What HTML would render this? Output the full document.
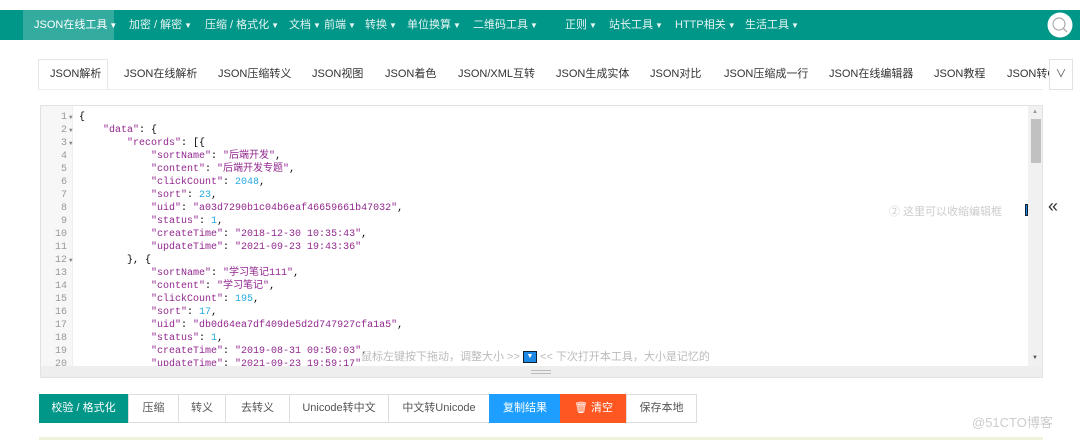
<!DOCTYPE html>
<html><head><meta charset="utf-8"><style>
*{margin:0;padding:0;box-sizing:border-box}
body{width:1080px;height:440px;background:#fff;position:relative;overflow:hidden;font-family:"Liberation Sans","Noto Sans CJK SC",sans-serif}
.nav{position:absolute;left:0;top:10px;width:1080px;height:30px;background:#009688}
.nav span{position:absolute;top:0;line-height:30px;font-size:11px;color:#e6f4f2;white-space:nowrap}
.nav span i{font-style:normal;font-size:8px;margin-left:2px}
.act{position:absolute;left:23px;top:0;width:91px;height:30px;background:#33ab9f}
.tab{position:absolute;top:59px;line-height:30px;font-size:11px;color:#333;white-space:nowrap}
.ed{position:absolute;left:40px;top:105px;width:1003px;height:273px;border:1px solid #e2e2e2;background:#fff;overflow:hidden}
.gut{position:absolute;left:0;top:0;width:32px;height:260px;background:#f7f7f7;border-right:1px solid #eee}
.code{position:absolute;left:0;top:5px;font-family:"Liberation Mono","Noto Sans CJK SC",monospace;font-size:10px}
.ln{display:block;height:13px;line-height:13px;white-space:pre;position:relative}
.n{display:inline-block;width:26px;text-align:right;color:#999;margin-right:12px}
.ar{position:absolute;left:28px;top:0;color:#888;font-size:6px}
.k{color:#92278f}.s{color:#92278f}.d{color:#25aae2}
.bar{position:absolute;left:0;top:260px;width:1003px;height:13px;background:#eee}
.sb{position:absolute;left:987px;top:0;width:15px;height:260px;background:#f1f1f1}
.btn{position:absolute;top:394px;height:29px;line-height:27px;font-size:11px;color:#555;border:1px solid #ddd;text-align:center;background:#fff}
</style></head><body>
<div class="nav"><div class="act"></div>
<span style="left:34px;color:#fff">JSON在线工具<i>▼</i></span>
<span style="left:129px">加密 / 解密<i>▼</i></span>
<span style="left:205px">压缩 / 格式化<i>▼</i></span>
<span style="left:289px">文档<i>▼</i></span>
<span style="left:324px">前端<i>▼</i></span>
<span style="left:365px">转换<i>▼</i></span>
<span style="left:407px">单位换算<i>▼</i></span>
<span style="left:473px">二维码工具<i>▼</i></span>
<span style="left:565px">正则<i>▼</i></span>
<span style="left:609px">站长工具<i>▼</i></span>
<span style="left:675px">HTTP相关<i>▼</i></span>
<span style="left:745px">生活工具<i>▼</i></span>
<svg style="position:absolute;left:1047px;top:2px" width="26" height="26"><circle cx="13" cy="13" r="12.5" fill="#fff"/><circle cx="12" cy="12" r="6" fill="none" stroke="#aaa" stroke-width="1.2"/><line x1="16.5" y1="16.5" x2="20" y2="20" stroke="#aaa" stroke-width="1.3"/></svg>
</div>
<div style="position:absolute;left:38px;top:59px;width:70px;height:31px;border:1px solid #e6e6e6;border-bottom-color:#fff"></div>
<div style="position:absolute;left:38px;top:89px;width:1005px;height:1px;background:#eee"></div>
<div class="tab" style="left:50px">JSON解析</div>
<div class="tab" style="left:124px">JSON在线解析</div>
<div class="tab" style="left:218px">JSON压缩转义</div>
<div class="tab" style="left:312px">JSON视图</div>
<div class="tab" style="left:385px">JSON着色</div>
<div class="tab" style="left:458px">JSON/XML互转</div>
<div class="tab" style="left:556px">JSON生成实体</div>
<div class="tab" style="left:650px">JSON对比</div>
<div class="tab" style="left:724px">JSON压缩成一行</div>
<div class="tab" style="left:829px">JSON在线编辑器</div>
<div class="tab" style="left:934px">JSON教程</div>
<div class="tab" style="left:1007px;width:42px;overflow:hidden">JSON转C</div>
<div style="position:absolute;left:1049px;top:59px;width:24px;height:31px;border:1px solid #e2e2e2;background:#fff;text-align:center;line-height:28px;font-size:11px;color:#555">&#8744;</div>
<div class="ed">
<div class="gut"></div>
<div class="sb"><div style="position:absolute;left:3px;top:13px;width:10px;height:44px;background:#c1c1c1"></div><div style="position:absolute;left:4px;top:3px;font-size:6px;color:#999">▲</div><div style="position:absolute;left:4px;top:249px;font-size:6px;color:#555">▼</div></div>
<div class="code"><div class="ln"><span class="n">1</span>{<span class="ar">▼</span></div><div class="ln"><span class="n">2</span>    <span class="k">"data"</span>: {<span class="ar">▼</span></div><div class="ln"><span class="n">3</span>        <span class="k">"records"</span>: [{<span class="ar">▼</span></div><div class="ln"><span class="n">4</span>            <span class="k">"sortName"</span>: <span class="s">"后端开发"</span>,</div><div class="ln"><span class="n">5</span>            <span class="k">"content"</span>: <span class="s">"后端开发专题"</span>,</div><div class="ln"><span class="n">6</span>            <span class="k">"clickCount"</span>: <span class="d">2048</span>,</div><div class="ln"><span class="n">7</span>            <span class="k">"sort"</span>: <span class="d">23</span>,</div><div class="ln"><span class="n">8</span>            <span class="k">"uid"</span>: <span class="s">"a03d7290b1c04b6eaf46659661b47032"</span>,</div><div class="ln"><span class="n">9</span>            <span class="k">"status"</span>: <span class="d">1</span>,</div><div class="ln"><span class="n">10</span>            <span class="k">"createTime"</span>: <span class="s">"2018-12-30 10:35:43"</span>,</div><div class="ln"><span class="n">11</span>            <span class="k">"updateTime"</span>: <span class="s">"2021-09-23 19:43:36"</span></div><div class="ln"><span class="n">12</span>        }, {<span class="ar">▼</span></div><div class="ln"><span class="n">13</span>            <span class="k">"sortName"</span>: <span class="s">"学习笔记111"</span>,</div><div class="ln"><span class="n">14</span>            <span class="k">"content"</span>: <span class="s">"学习笔记"</span>,</div><div class="ln"><span class="n">15</span>            <span class="k">"clickCount"</span>: <span class="d">195</span>,</div><div class="ln"><span class="n">16</span>            <span class="k">"sort"</span>: <span class="d">17</span>,</div><div class="ln"><span class="n">17</span>            <span class="k">"uid"</span>: <span class="s">"db0d64ea7df409de5d2d747927cfa1a5"</span>,</div><div class="ln"><span class="n">18</span>            <span class="k">"status"</span>: <span class="d">1</span>,</div><div class="ln"><span class="n">19</span>            <span class="k">"createTime"</span>: <span class="s">"2019-08-31 09:50:03"</span>,</div><div class="ln"><span class="n">20</span>            <span class="k">"updateTime"</span>: <span class="s">"2021-09-23 19:59:17"</span></div></div>
<div style="position:absolute;left:320px;top:242px;font-size:11px;color:#bbb;white-space:nowrap">鼠标左键按下拖动，调整大小 &gt;&gt; <span style="display:inline-block;width:14px;height:12px;background:#1e88e5;border:1px solid #123;color:#fff;font-size:7px;text-align:center;line-height:10px;vertical-align:middle">▼</span> &lt;&lt; 下次打开本工具，大小是记忆的</div>
<div style="position:absolute;left:848px;top:97px;font-size:11px;color:#ccc;white-space:nowrap">② 这里可以收缩编辑框</div>
<div style="position:absolute;left:984px;top:98px;width:3px;height:12px;background:#1e88e5;border:1px solid #123"></div>
<div class="bar"><div style="position:absolute;left:490px;top:4px;width:20px;height:1px;background:#bbb"></div><div style="position:absolute;left:490px;top:7px;width:20px;height:1px;background:#bbb"></div></div>
</div>
<div style="position:absolute;left:1048px;top:196px;font-size:18px;color:#333">«</div>
<div class="btn" style="left:39px;width:89px;background:#009688;color:#fff;border-color:#009688">校验 / 格式化</div>
<div class="btn" style="left:128px;width:51px">压缩</div>
<div class="btn" style="left:178px;width:48px">转义</div>
<div class="btn" style="left:225px;width:65px">去转义</div>
<div class="btn" style="left:289px;width:100px">Unicode转中文</div>
<div class="btn" style="left:388px;width:102px">中文转Unicode</div>
<div class="btn" style="left:489px;width:72px;background:#1e9fff;color:#fff;border-color:#1e9fff">复制结果</div>
<div class="btn" style="left:560px;width:67px;background:#ff5722;color:#fff;border-color:#ff5722">🗑 清空</div>
<div class="btn" style="left:626px;width:71px">保存本地</div>
<div style="position:absolute;left:972px;top:412px;font-size:13px;color:#ccc">@51CTO博客</div>
<div style="position:absolute;left:39px;top:437px;width:1004px;height:3px;background:#eef3dc"></div>
</body></html>
